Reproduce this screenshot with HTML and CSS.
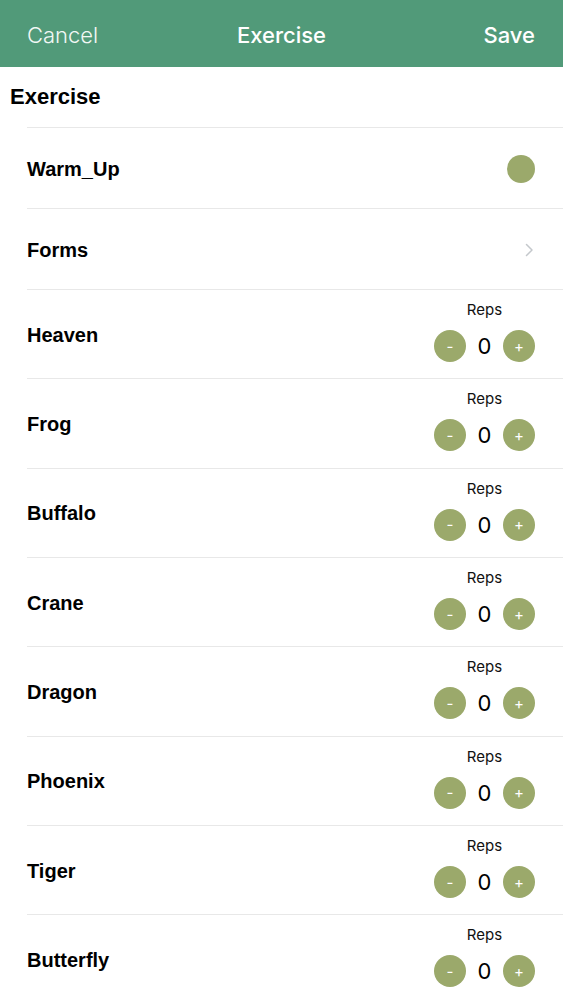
FILE: index.html
```html
<!DOCTYPE html>
<html>
<head>
<meta charset="utf-8">
<link rel="stylesheet" href="styles.css">
</head>
<body>
<header class="nav">
  <span class="nav-left">Cancel</span>
  <span class="nav-title">Exercise</span>
  <span class="nav-right">Save</span>
</header>
<div class="section-title">Exercise</div>
<div class="list">
  <div class="row row-short">
    <span class="label">Warm_Up</span>
    <span class="dot"></span>
  </div>
  <div class="row row-short">
    <span class="label">Forms</span>
    <svg class="chev" width="9" height="14" viewBox="0 0 9 14"><path d="M1.5 1.5 L7 7 L1.5 12.5" fill="none" stroke="#c4c8cc" stroke-width="1.5" stroke-linecap="round" stroke-linejoin="round"/></svg>
  </div>
  <div class="row row-reps"><span class="label">Heaven</span><div class="reps"><span class="reps-label">Reps</span><div class="stepper"><span class="btn">-</span><span class="val">0</span><span class="btn">+</span></div></div></div>
  <div class="row row-reps"><span class="label">Frog</span><div class="reps"><span class="reps-label">Reps</span><div class="stepper"><span class="btn">-</span><span class="val">0</span><span class="btn">+</span></div></div></div>
  <div class="row row-reps"><span class="label">Buffalo</span><div class="reps"><span class="reps-label">Reps</span><div class="stepper"><span class="btn">-</span><span class="val">0</span><span class="btn">+</span></div></div></div>
  <div class="row row-reps"><span class="label">Crane</span><div class="reps"><span class="reps-label">Reps</span><div class="stepper"><span class="btn">-</span><span class="val">0</span><span class="btn">+</span></div></div></div>
  <div class="row row-reps"><span class="label">Dragon</span><div class="reps"><span class="reps-label">Reps</span><div class="stepper"><span class="btn">-</span><span class="val">0</span><span class="btn">+</span></div></div></div>
  <div class="row row-reps"><span class="label">Phoenix</span><div class="reps"><span class="reps-label">Reps</span><div class="stepper"><span class="btn">-</span><span class="val">0</span><span class="btn">+</span></div></div></div>
  <div class="row row-reps"><span class="label">Tiger</span><div class="reps"><span class="reps-label">Reps</span><div class="stepper"><span class="btn">-</span><span class="val">0</span><span class="btn">+</span></div></div></div>
  <div class="row row-reps"><span class="label">Butterfly</span><div class="reps"><span class="reps-label">Reps</span><div class="stepper"><span class="btn">-</span><span class="val">0</span><span class="btn">+</span></div></div></div>
</div>
</body>
</html>
```
FILE: styles.css
```css
html, body {
  margin: 0;
  padding: 0;
  background: #ffffff;
  overflow: hidden;
}
body {
  font-family: "Liberation Sans", Arial, sans-serif;
  color: #000;
}
.nav {
  height: 67px;
  box-sizing: border-box;
  padding: 3px 28px 0 27px;
  background: #519a79;
  display: flex;
  align-items: center;
  justify-content: space-between;
  position: relative;
  font-family: Inter, "Liberation Sans", sans-serif;
  color: #fff;
  font-size: 22px;
}
.nav-left {
  font-weight: 300;
  color: #f2f8f5;
}
.nav-title {
  font-weight: 500;
  position: absolute;
  left: 0;
  right: 0;
  top: 3px;
  bottom: 0;
  display: flex;
  align-items: center;
  justify-content: center;
  pointer-events: none;
}
.nav-right {
  font-weight: 500;
}
.section-title {
  height: 60px;
  display: flex;
  align-items: center;
  padding-left: 10px;
  font-weight: bold;
  font-size: 22px;
  box-sizing: border-box;
}
.list {
  display: flex;
  flex-direction: column;
}
.row {
  display: flex;
  align-items: center;
  justify-content: space-between;
  margin-left: 27px;
  padding-right: 28px;
  border-top: 1px solid #e8e8e8;
  box-sizing: border-box;
}
.row-short {
  height: 81px;
  padding-top: 2px;
}
.row-reps {
  height: 89.35px;
  align-items: stretch;
}
.row-reps .label {
  align-self: center;
  padding-top: 2px;
}
.label {
  font-weight: bold;
  font-size: 20px;
}
.dot {
  width: 28px;
  height: 28px;
  border-radius: 50%;
  background: #9ba96b;
}
.chev {
  margin-right: 1px;
}
.reps {
  display: flex;
  flex-direction: column;
  align-items: center;
  padding-top: 11px;
}
.reps-label {
  font-family: Inter, "Liberation Sans", sans-serif;
  font-size: 15px;
  line-height: 18px;
  color: #111;
}
.stepper {
  margin-top: 11px;
  display: flex;
  align-items: center;
}
.btn {
  width: 32px;
  height: 32px;
  border-radius: 50%;
  background: #9ba96b;
  color: #fff;
  font-family: Inter, "Liberation Sans", sans-serif;
  font-size: 15px;
  display: flex;
  align-items: center;
  justify-content: center;
}
.val {
  width: 37px;
  text-align: center;
  font-family: Inter, "Liberation Sans", sans-serif;
  font-size: 22px;
  font-weight: 400;
}
```
